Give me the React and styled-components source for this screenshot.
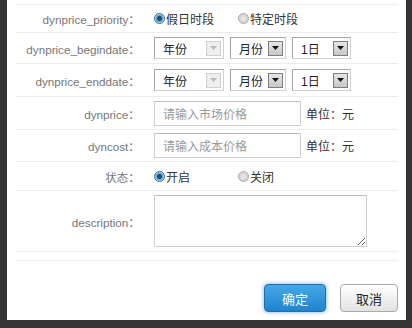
import styled, { createGlobalStyle } from "styled-components"

const GlobalStyle = createGlobalStyle`
  html, body {
    margin: 0;
    padding: 0;
    background: #353535;
  }
  body {
    font-family: "Liberation Sans", "Noto Sans CJK SC", sans-serif;
    font-size: 12px;
  }
`

function Radio({ label, checked }) {
  return (
    <RadioLabel>
      <RadioDot checked={checked} />
      {label}
    </RadioLabel>
  )
}

function Select({ value, width, disabled }) {
  return (
    <SelectBox width={width}>
      <span>{value}</span>
      <ArrowButton disabled={disabled}>
        <svg width="7" height="4" viewBox="0 0 7 4">
          <path d="M0 0h7L3.5 4z" fill={disabled ? "#b8b8b8" : "#111"} />
        </svg>
      </ArrowButton>
    </SelectBox>
  )
}

export default function App() {
  return (
    <>
      <GlobalStyle />
      <Page>
        <Panel>
          <Form>
            <Row height={28}>
              <Label>dynprice_priority：</Label>
              <Field>
                <Radio label="假日时段" checked />
                <Radio label="特定时段" />
              </Field>
            </Row>
            <Row height={31}>
              <Label>dynprice_begindate：</Label>
              <Field gap={6}>
                <Select value="年份" width={70} disabled />
                <Select value="月份" width={56} />
                <Select value="1日" width={59} />
              </Field>
            </Row>
            <Row height={33}>
              <Label>dynprice_enddate：</Label>
              <Field gap={6}>
                <Select value="年份" width={70} disabled />
                <Select value="月份" width={56} />
                <Select value="1日" width={59} />
              </Field>
            </Row>
            <Row height={33}>
              <Label>dynprice：</Label>
              <Field>
                <TextInput placeholder="请输入市场价格" />
                <Unit>单位：元</Unit>
              </Field>
            </Row>
            <Row height={32}>
              <Label>dyncost：</Label>
              <Field>
                <TextInput placeholder="请输入成本价格" />
                <Unit>单位：元</Unit>
              </Field>
            </Row>
            <Row height={29}>
              <Label>状态：</Label>
              <Field>
                <Radio label="开启" checked />
                <Radio label="关闭" />
              </Field>
            </Row>
            <Row height={60}>
              <Label>description：</Label>
              <Field>
                <TextArea />
              </Field>
            </Row>
          </Form>
          <Footer>
            <Button primary>确定</Button>
            <Button>取消</Button>
          </Footer>
        </Panel>
      </Page>
    </>
  )
}

const Page = styled.div`
  width: 412px;
  height: 328px;
  box-sizing: border-box;
  padding: 0 6px 8px 7px;
  display: flex;
`

const Panel = styled.div`
  flex: 1;
  background: #fff;
  padding: 4px 8px 0 9px;
  display: flex;
  flex-direction: column;
`

const Form = styled.div`
  border-top: 1px solid #ececec;
  border-bottom: 1px solid #ececec;
`

const Row = styled.div`
  display: grid;
  grid-template-columns: 124px 1fr;
  column-gap: 14px;
  align-items: center;
  height: ${(p) => p.height}px;
  box-sizing: border-box;
  border-bottom: 1px solid #ececec;

  &:last-child {
    border-bottom: none;
  }
`

const Label = styled.div`
  text-align: right;
  color: #777;
  font-size: 11.7px;
  white-space: nowrap;
`

const Field = styled.div`
  display: flex;
  align-items: center;
  gap: ${(p) => p.gap ?? 18}px;
`

const RadioLabel = styled.label`
  display: flex;
  align-items: center;
  gap: 1px;
  color: #333;
  font-size: 12px;
  width: 66px;
`

const RadioDot = styled.span`
  width: 11px;
  height: 11px;
  border-radius: 50%;
  box-sizing: border-box;
  border: 1px solid ${(p) => (p.checked ? "#3b6d8f" : "#a8a8a8")};
  background: ${(p) =>
    p.checked
      ? "radial-gradient(circle, #1d4e72 0 2px, #5aa2d2 3px, #d7ecf8 5px)"
      : "radial-gradient(circle, #e4e4e4 0 2px, #cfcfcf 4px, #f2f2f2 5px)"};
`

const SelectBox = styled.div`
  width: ${(p) => p.width}px;
  height: 22px;
  box-sizing: border-box;
  border: 1px solid #a5a5a5;
  border-right-color: #d0d0d0;
  border-bottom-color: #d0d0d0;
  display: flex;
  align-items: center;
  justify-content: space-between;
  padding: 0 2px 0 8px;
  color: #222;
  font-size: 12px;
`

const ArrowButton = styled.span`
  width: 15px;
  height: 15px;
  box-sizing: border-box;
  display: flex;
  align-items: center;
  justify-content: center;
  border: 1px solid ${(p) => (p.disabled ? "#cfcfcf" : "#7d7d7d")};
  background: ${(p) =>
    p.disabled ? "#efefef" : "linear-gradient(#e6e6e6, #c7c7c7)"};
`

const TextInput = styled.input`
  width: 147px;
  height: 25px;
  box-sizing: border-box;
  border: 1px solid #cfcfcf;
  border-top-color: #bdbdbd;
  padding: 0 8px;
  font-family: "Noto Sans CJK SC", sans-serif;
  font-size: 12px;
  outline: none;

  &::placeholder {
    color: #9a9a9a;
  }
`

const Unit = styled.span`
  color: #333;
  font-size: 12px;
  margin-left: -13px;
`

const TextArea = styled.textarea`
  width: 213px;
  height: 52px;
  box-sizing: border-box;
  border: 1px solid #cfcfcf;
  border-top-color: #bdbdbd;
  resize: both;
  outline: none;
`

const Footer = styled.div`
  margin-top: 8px;
  border-top: 1px solid #ececec;
  flex: 1;
  display: flex;
  justify-content: flex-end;
  align-items: flex-start;
  gap: 14px;
  padding-top: 23px;
`

const Button = styled.button`
  height: 28px;
  min-width: ${(p) => (p.primary ? 62 : 58)}px;
  border-radius: 4px;
  font-family: "Noto Sans CJK SC", sans-serif;
  font-size: 13px;
  cursor: pointer;
  border: 1px solid ${(p) => (p.primary ? "#1f6fb0" : "#a9a9a9")};
  color: ${(p) => (p.primary ? "#fff" : "#222")};
  background: ${(p) =>
    p.primary
      ? "linear-gradient(#44a8e6, #1f84cf)"
      : "linear-gradient(#ffffff, #e3e3e3)"};
  box-shadow: ${(p) => (p.primary ? "0 0 4px rgba(60, 140, 230, 0.7)" : "none")};
`
